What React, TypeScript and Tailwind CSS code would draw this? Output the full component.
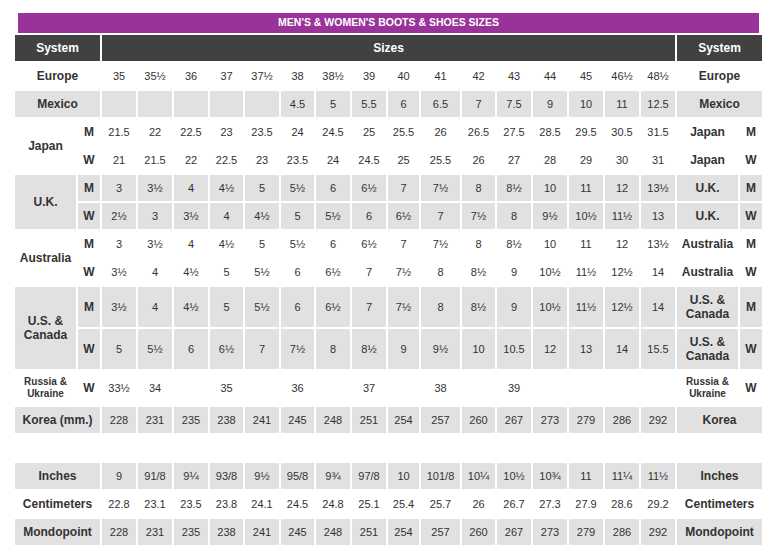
import React from "react";

const europe = ["35", "35½", "36", "37", "37½", "38", "38½", "39", "40", "41", "42", "43", "44", "45", "46½", "48½"];
const mexico = ["", "", "", "", "", "4.5", "5", "5.5", "6", "6.5", "7", "7.5", "9", "10", "11", "12.5"];
const japanM = ["21.5", "22", "22.5", "23", "23.5", "24", "24.5", "25", "25.5", "26", "26.5", "27.5", "28.5", "29.5", "30.5", "31.5"];
const japanW = ["21", "21.5", "22", "22.5", "23", "23.5", "24", "24.5", "25", "25.5", "26", "27", "28", "29", "30", "31"];
const ukM = ["3", "3½", "4", "4½", "5", "5½", "6", "6½", "7", "7½", "8", "8½", "10", "11", "12", "13½"];
const ukW = ["2½", "3", "3½", "4", "4½", "5", "5½", "6", "6½", "7", "7½", "8", "9½", "10½", "11½", "13"];
const auM = ukM;
const auW = ["3½", "4", "4½", "5", "5½", "6", "6½", "7", "7½", "8", "8½", "9", "10½", "11½", "12½", "14"];
const usM = auW;
const usW = ["5", "5½", "6", "6½", "7", "7½", "8", "8½", "9", "9½", "10", "10.5", "12", "13", "14", "15.5"];
const russia = ["33½", "34", "", "35", "", "36", "", "37", "", "38", "", "39", "", "", "", ""];
const korea = ["228", "231", "235", "238", "241", "245", "248", "251", "254", "257", "260", "267", "273", "279", "286", "292"];
const inches = ["9", "91/8", "9¼", "93/8", "9½", "95/8", "9¾", "97/8", "10", "101/8", "10¼", "10½", "10¾", "11", "11¼", "11½"];
const cm = ["22.8", "23.1", "23.5", "23.8", "24.1", "24.5", "24.8", "25.1", "25.4", "25.7", "26", "26.7", "27.3", "27.9", "28.6", "29.2"];

const cellBase = "flex items-center justify-center text-center";

function Nums({ vals, gray }: { vals: string[]; gray: boolean }) {
  return (
    <>
      {vals.map((v, i) => (
        <div key={i} className={`${cellBase} text-[11px] ${gray ? "bg-[#e1e1e1]" : ""}`}>
          {v}
        </div>
      ))}
    </>
  );
}

function Label({ children, gray, span2, rows2, small }: { children: React.ReactNode; gray: boolean; span2?: boolean; rows2?: boolean; small?: boolean }) {
  return (
    <div
      className={`${cellBase} font-bold ${small ? "text-[10px] leading-[12px]" : "text-[12px] leading-[14px]"} ${gray ? "bg-[#e1e1e1]" : ""} ${span2 ? "col-span-2" : ""} ${rows2 ? "row-span-2" : ""}`}
    >
      {children}
    </div>
  );
}

function SimpleRow({ label, rightLabel, vals, gray }: { label: string; rightLabel?: string; vals: string[]; gray: boolean }) {
  return (
    <>
      <Label gray={gray} span2>{label}</Label>
      <Nums vals={vals} gray={gray} />
      <Label gray={gray} span2>{rightLabel ?? label}</Label>
    </>
  );
}

function PairRows({ left, right, m, w, gray, small }: { left: React.ReactNode; right: React.ReactNode; m: string[]; w: string[]; gray: boolean; small?: boolean }) {
  return (
    <>
      <Label gray={gray} rows2>{left}</Label>
      <Label gray={gray}>M</Label>
      <Nums vals={m} gray={gray} />
      <Label gray={gray} small={small}>{right}</Label>
      <Label gray={gray}>M</Label>
      <Label gray={gray}>W</Label>
      <Nums vals={w} gray={gray} />
      <Label gray={gray} small={small}>{right}</Label>
      <Label gray={gray}>W</Label>
    </>
  );
}

export default function App() {
  return (
    <div className="w-[777px] h-[557px] bg-white pl-[15px] pt-[13px] font-['Liberation_Sans',Arial,sans-serif] text-[#333]">
      <div className="ml-[3px] w-[741px] h-[20px] mb-[2px] bg-[#993399] text-white font-bold text-[10.5px] flex items-center justify-center">
        MEN'S &amp; WOMEN'S BOOTS &amp; SHOES SIZES
      </div>
      <div className="grid w-[747px] gap-[2px] grid-cols-[61px_22px_34px_34px_34px_33px_34px_33px_34px_34px_31px_39px_33px_34px_34px_34px_34px_34px_61px_22px] grid-rows-[26px_26px_26px_26px_26px_26px_26px_26px_26px_40px_40px_34px_26px_26px_26px_26px_26px]">
        <div className={`${cellBase} col-span-2 bg-[#414141] text-white font-bold text-[12px]`}>System</div>
        <div className={`${cellBase} col-span-16 bg-[#414141] text-white font-bold text-[12px]`}>Sizes</div>
        <div className={`${cellBase} col-span-2 bg-[#414141] text-white font-bold text-[12px]`}>System</div>

        <SimpleRow label="Europe" vals={europe} gray={false} />
        <SimpleRow label="Mexico" vals={mexico} gray={true} />
        <PairRows left="Japan" right="Japan" m={japanM} w={japanW} gray={false} />
        <PairRows left="U.K." right="U.K." m={ukM} w={ukW} gray={true} />
        <PairRows left="Australia" right="Australia" m={auM} w={auW} gray={false} />
        <PairRows
          left={<span>U.S. &amp;<br />Canada</span>}
          right={<span>U.S. &amp;<br />Canada</span>}
          m={usM}
          w={usW}
          gray={true}
        />

        <Label gray={false} small>
          <span>Russia &amp;<br />Ukraine</span>
        </Label>
        <Label gray={false}>W</Label>
        <Nums vals={russia} gray={false} />
        <Label gray={false} small>
          <span>Russia &amp;<br />Ukraine</span>
        </Label>
        <Label gray={false}>W</Label>

        <SimpleRow label="Korea (mm.)" rightLabel="Korea" vals={korea} gray={true} />

        <div className="col-span-20" />

        <SimpleRow label="Inches" vals={inches} gray={true} />
        <SimpleRow label="Centimeters" vals={cm} gray={false} />
        <SimpleRow label="Mondopoint" vals={korea} gray={true} />
      </div>
    </div>
  );
}
